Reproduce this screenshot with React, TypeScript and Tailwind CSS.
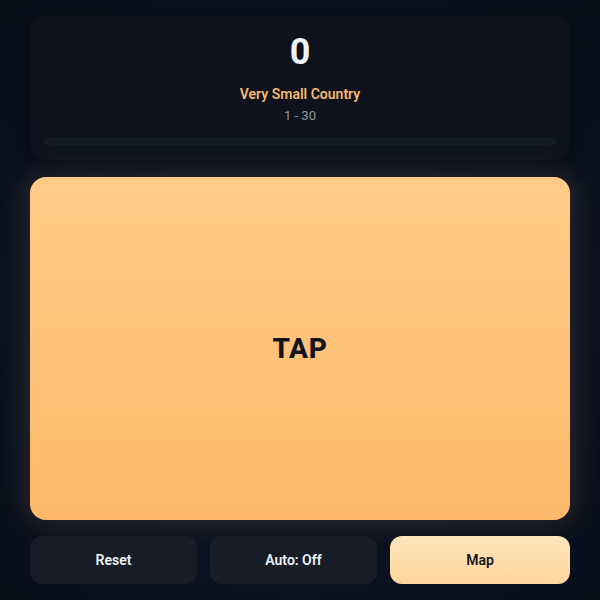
import { useState } from "react";

export default function App() {
  const [count, setCount] = useState(0);
  const [auto, setAuto] = useState(false);

  return (
    <div
      className="w-[600px] h-[600px] overflow-hidden bg-[#0b1322] bg-[radial-gradient(ellipse_at_center,#0c1424_0%,#0a1120_70%,#080e1a_100%)] px-[30px] pt-4 flex flex-col"
      style={{ fontFamily: "Roboto, 'Liberation Sans', sans-serif" }}
    >
      {/* Score card */}
      <div className="rounded-2xl bg-[#0d121c] px-[14px] pt-4 pb-[14px] flex flex-col items-center shadow-[0_4px_24px_rgba(0,0,0,0.35)]">
        <div className="text-4xl leading-10 font-bold text-[#eef2fa]">{count}</div>
        <div className="mt-3 text-sm leading-5 font-semibold text-[#f6b96e]">Very Small Country</div>
        <div className="mt-1 text-[13px] leading-4 text-[#8f96a2]">1 - 30</div>
        <div className="mt-[13px] h-[9px] w-full rounded-full bg-[#141a25]" />
      </div>

      {/* Tap area */}
      <button
        onClick={() => setCount(count + 1)}
        className="mt-[17px] h-[343px] w-full rounded-2xl bg-gradient-to-b from-[#ffcc88] to-[#ffb86b] flex items-center justify-center shadow-[0_0_32px_rgba(255,184,106,0.18)]"
      >
        <span className="text-[28px] font-extrabold tracking-wide text-[#12151c]">TAP</span>
      </button>

      {/* Controls */}
      <div className="mt-4 grid grid-cols-[167px_167px_1fr] gap-[13px] h-[48px]">
        <button
          onClick={() => setCount(0)}
          className="rounded-xl bg-[#171c27] text-sm font-semibold text-[#eef2fa]"
        >
          Reset
        </button>
        <button
          onClick={() => setAuto(!auto)}
          className="rounded-xl bg-[#171c27] text-sm font-semibold text-[#eef2fa]"
        >
          Auto: {auto ? "On" : "Off"}
        </button>
        <button className="rounded-xl bg-gradient-to-b from-[#ffe5bb] to-[#ffd69c] text-sm font-semibold text-[#12151c]">
          Map
        </button>
      </div>
    </div>
  );
}
